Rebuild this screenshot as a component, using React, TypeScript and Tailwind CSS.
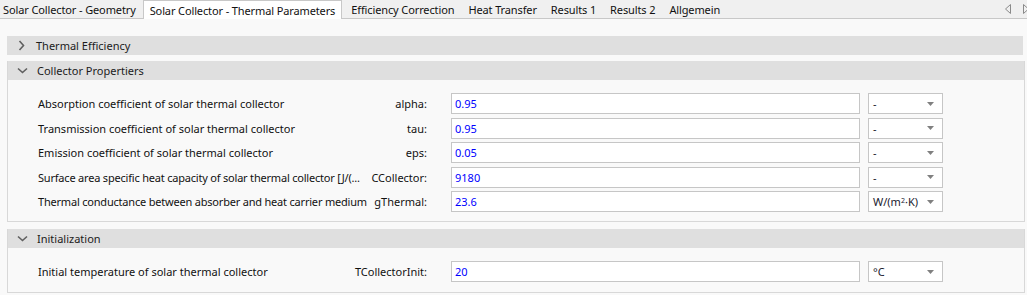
import React from "react";

const tabs = [
  "Solar Collector - Geometry",
  "Solar Collector - Thermal Parameters",
  "Efficiency Correction",
  "Heat Transfer",
  "Results 1",
  "Results 2",
  "Allgemein",
];

type Row = { label: string; name: string; value: string; unit: React.ReactNode; tight?: boolean };

const collectorRows: Row[] = [
  { label: "Absorption coefficient of solar thermal collector", name: "alpha:", value: "0.95", unit: "-" },
  { label: "Transmission coefficient of solar thermal collector", name: "tau:", value: "0.95", unit: "-" },
  { label: "Emission coefficient of solar thermal collector", name: "eps:", value: "0.05", unit: "-" },
  {
    label: "Surface area specific heat capacity of solar thermal collector [J/(...",
    name: "CCollector:",
    value: "9180",
    unit: "-",
    tight: true,
  },
  {
    label: "Thermal conductance between absorber and heat carrier medium",
    name: "gThermal:",
    value: "23.6",
    tight: true,
    unit: (
      <span>
        W/(m<sup className="text-[7px]">2</sup>·K)
      </span>
    ),
  },
];

const initRows: Row[] = [
  { label: "Initial temperature of solar thermal collector", name: "TCollectorInit:", value: "20", unit: "°C" },
];

const Chevron = ({ open }: { open: boolean }) => (
  <svg width="11" height="11" viewBox="0 0 11 11" className="shrink-0">
    {open ? (
      <path d="M1 3.5 L5.5 7.5 L10 3.5" fill="none" stroke="#606060" strokeWidth="1.6" />
    ) : (
      <path d="M3.5 1 L7.5 5.5 L3.5 10" fill="none" stroke="#606060" strokeWidth="1.6" />
    )}
  </svg>
);

const SectionHeader = ({ title, open }: { title: string; open: boolean }) => (
  <div className="flex items-center h-[19px] bg-[#dfdfdf] pl-[9px] gap-[9px] text-[#1b1b1b]">
    <Chevron open={open} />
    <span>{title}</span>
  </div>
);

const FieldRow = ({ row }: { row: Row }) => (
  <div className="flex items-center h-[21px]">
    <div className="w-[389px] flex items-center justify-between gap-[4px] whitespace-nowrap text-[#111]">
      <span className={row.tight ? "tracking-[-0.2px]" : ""}>{row.label}</span>
      <span className="shrink-0">{row.name}</span>
    </div>
    <div className="ml-[24px] w-[409px] h-[21px] bg-white border border-[#c6c6c6] flex items-center pl-[3px] text-[#0000ff]">
      {row.value}
    </div>
    <div className="ml-[8px] w-[75px] h-[21px] bg-white border border-[#c6c6c6] flex items-center justify-between pl-[4px] pr-[8px] text-[#1a1a2e]">
      <span>{row.unit}</span>
      <svg width="7" height="4" viewBox="0 0 7 4">
        <path d="M0 0 L7 0 L3.5 4 Z" fill="#808080" />
      </svg>
    </div>
  </div>
);

export default function App() {
  return (
    <div
      className="w-[1027px] h-[295px] overflow-hidden bg-[#f9f9f9] text-[11px] leading-none"
      style={{ fontFamily: '"Noto Sans", "Open Sans", sans-serif' }}
    >
      <div className="flex items-end h-[19px] bg-[#f0f0f0] border-b border-[#c8c8c8] tracking-[-0.12px]">
        <div className="flex items-end h-full">
          {tabs.map((t, i) =>
            i === 1 ? (
              <div
                key={t}
                className="h-[19px] -mb-px px-[6px] bg-white border border-b-0 border-[#c8c8c8] flex items-center mr-[2px] text-[#111] whitespace-nowrap"
              >
                {t}
              </div>
            ) : (
              <div
                key={t}
                className={`h-[18px] flex items-center pr-[7px] text-[#111] whitespace-nowrap ${i === 0 ? "pl-[3px]" : "pl-[7px]"}`}
              >
                {t}
              </div>
            )
          )}
        </div>
        <div className="ml-auto flex items-center h-full gap-[12px] -mr-[2px]">
          <svg width="6" height="10" viewBox="0 0 6 10">
            <path d="M5.5 0.5 L0.5 5 L5.5 9.5 Z" fill="none" stroke="#8a8a8a" />
          </svg>
          <svg width="6" height="10" viewBox="0 0 6 10">
            <path d="M0.5 0.5 L5.5 5 L0.5 9.5 Z" fill="none" stroke="#8a8a8a" />
          </svg>
        </div>
      </div>

      <div className="pl-[7px] pr-[2px] pt-[17px] flex flex-col">
        <div className="mr-[2px]">
          <SectionHeader title="Thermal Efficiency" open={false} />
        </div>

        <div className="mt-[6px] border border-t-0 border-[#d8d8d8]">
          <SectionHeader title="Collector Propertiers" open={true} />
          <div className="pl-[30px] pt-[13px] pb-[9px] flex flex-col gap-[3.5px]">
            {collectorRows.map((r) => (
              <FieldRow key={r.name} row={r} />
            ))}
          </div>
        </div>

        <div className="mt-[7px] border border-t-0 border-[#d8d8d8]">
          <SectionHeader title="Initialization" open={true} />
          <div className="pl-[30px] pt-[13px] pb-[10px] flex flex-col">
            {initRows.map((r) => (
              <FieldRow key={r.name} row={r} />
            ))}
          </div>
        </div>
      </div>
    </div>
  );
}
